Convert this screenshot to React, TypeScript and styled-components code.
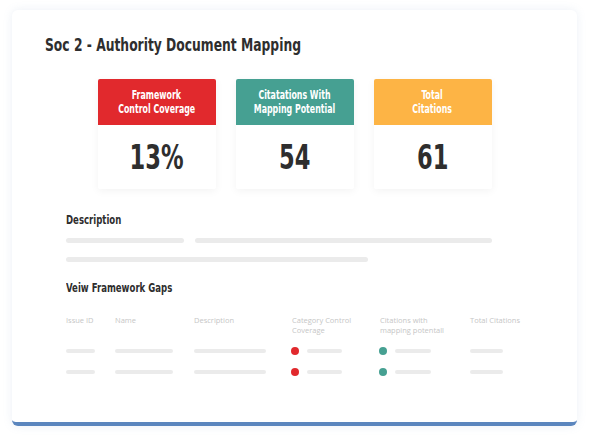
import styled, { createGlobalStyle } from "styled-components";

const GlobalStyle = createGlobalStyle`
  html, body {
    margin: 0;
    padding: 0;
    background: #ffffff;
  }
  body {
    font-family: "DejaVu Sans Condensed", "Liberation Sans", sans-serif;
  }
`;

// the reference uses a condensed grotesque; squeeze DejaVu Condensed to match
const Narrow = styled.span<{ $origin?: string; $scale?: number }>`
  display: inline-block;
  white-space: nowrap;
  transform: scaleX(${(p) => p.$scale ?? 0.76});
  transform-origin: ${(p) => p.$origin ?? "left"} center;
`;

const Page = styled.div`
  width: 589px;
  height: 442px;
  box-sizing: border-box;
  padding: 10px 12px 0 12px;
`;

const Card = styled.div`
  width: 565px;
  height: 416px;
  box-sizing: border-box;
  background: #ffffff;
  border-radius: 6px;
  border-bottom: 4px solid #5b86be;
  box-shadow: 0 0 10px rgba(120, 150, 190, 0.14);
  padding: 25px 0 0 33px;
  display: flex;
  flex-direction: column;
`;

const Title = styled.h1`
  font-size: 18.5px;
  font-weight: 700;
  color: #2e2e2e;
  margin: 0;
  line-height: 20px;
`;

const StatRow = styled.div`
  display: flex;
  justify-content: center;
  gap: 20px;
  margin: 24px 0 0 -33px;
`;

const Stat = styled.div`
  width: 118px;
  display: flex;
  flex-direction: column;
  border-radius: 2px;
  box-shadow: 0 2px 8px rgba(0, 0, 0, 0.05);
`;

const StatHead = styled.div<{ $bg: string }>`
  height: 46px;
  background: ${(p) => p.$bg};
  border-radius: 2px 2px 0 0;
  color: #ffffff;
  font-size: 11.5px;
  font-weight: 700;
  line-height: 14px;
  text-align: center;
  display: flex;
  flex-direction: column;
  align-items: center;
  justify-content: center;
`;

const StatValue = styled.div`
  height: 64px;
  display: flex;
  align-items: center;
  justify-content: center;
  font-size: 33px;
  font-weight: 700;
  color: #2e2e2e;
`;

const Section = styled.div<{ $top: number }>`
  padding-left: 21px;
  width: 426px;
  margin-top: ${(p) => p.$top}px;
`;

const Label = styled.h2`
  font-size: 12.5px;
  font-weight: 700;
  color: #2e2e2e;
  margin: 0;
  line-height: 16px;
`;

const LineRow = styled.div<{ $top: number }>`
  display: flex;
  gap: 11px;
  margin-top: ${(p) => p.$top}px;
`;

const Bar = styled.div<{ $w: number; $h?: number }>`
  width: ${(p) => p.$w}px;
  height: ${(p) => p.$h ?? 5}px;
  border-radius: 3px;
  background: #ebebeb;
  flex-shrink: 0;
`;

const Table = styled.div`
  display: grid;
  grid-template-columns: 49px 79px 98px 88px 90px 1fr;
  margin-top: 19px;
`;

const HeadCell = styled.div<{ $wide?: boolean }>`
  font-family: "Open Sans", "Noto Sans", sans-serif;
  font-size: 7.5px;
  line-height: 10px;
  color: #c6c6c6;
  max-width: ${(p) => (p.$wide ? "none" : "66px")};
  white-space: ${(p) => (p.$wide ? "nowrap" : "normal")};
  height: 25px;
`;

const Cell = styled.div`
  height: 21px;
  display: flex;
  align-items: center;
  gap: 8px;
`;

const Dot = styled.span<{ $c: string }>`
  width: 8px;
  height: 8px;
  border-radius: 50%;
  background: ${(p) => p.$c};
  margin-left: -1px;
`;

const stats = [
  { head: ["Framework", "Control Coverage"], value: "13%", bg: "#e1292d" },
  { head: ["Citatations With", "Mapping Potential"], value: "54", bg: "#46a092" },
  { head: ["Total", "Citations"], value: "61", bg: "#fdb445" },
];

const headers = [
  "Issue ID",
  "Name",
  "Description",
  "Category Control Coverage",
  "Citations with mapping potentall",
  "Total Citations",
];

function Row() {
  return (
    <>
      <Cell>
        <Bar $w={29} $h={4} />
      </Cell>
      <Cell>
        <Bar $w={58} $h={4} />
      </Cell>
      <Cell>
        <Bar $w={72} $h={4} />
      </Cell>
      <Cell>
        <Dot $c="#e1292d" />
        <Bar $w={35} $h={4} />
      </Cell>
      <Cell>
        <Dot $c="#46a092" />
        <Bar $w={36} $h={4} />
      </Cell>
      <Cell>
        <Bar $w={33} $h={4} />
      </Cell>
    </>
  );
}

export default function App() {
  return (
    <>
      <GlobalStyle />
      <Page>
        <Card>
          <Title>
            <Narrow $scale={0.74}>Soc 2 - Authority Document Mapping</Narrow>
          </Title>
          <StatRow>
            {stats.map((s) => (
              <Stat key={s.value}>
                <StatHead $bg={s.bg}>
                  <Narrow $origin="center">{s.head[0]}</Narrow>
                  <Narrow $origin="center">{s.head[1]}</Narrow>
                </StatHead>
                <StatValue>
                  <Narrow $origin="center">{s.value}</Narrow>
                </StatValue>
              </Stat>
            ))}
          </StatRow>
          <Section $top={23}>
            <Label>
              <Narrow>Description</Narrow>
            </Label>
            <LineRow $top={10}>
              <Bar $w={118} />
              <Bar $w={297} />
            </LineRow>
            <LineRow $top={14}>
              <Bar $w={302} />
            </LineRow>
          </Section>
          <Section $top={18}>
            <Label>
              <Narrow>Veiw Framework Gaps</Narrow>
            </Label>
            <Table>
              {headers.map((h, i) => (
                <HeadCell key={h} $wide={i === headers.length - 1}>
                  {h}
                </HeadCell>
              ))}
              <Row />
              <Row />
            </Table>
          </Section>
        </Card>
      </Page>
    </>
  );
}
